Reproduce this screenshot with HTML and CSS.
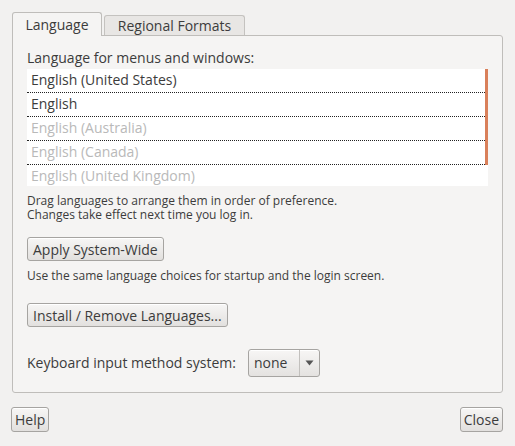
FILE: index.html
```html
<!DOCTYPE html>
<html>
<head>
<meta charset="utf-8">
<link rel="stylesheet" href="styles.css">
</head>
<body>
<div class="window">
  <div class="tabs">
    <div class="tab active">Language</div>
    <div class="tab">Regional Formats</div>
  </div>
  <div class="panel">
    <div class="label">Language for menus and windows:</div>
    <div class="list">
      <div class="rows">
        <div class="row">English (United States)</div>
        <div class="row">English</div>
        <div class="row dim">English (Australia)</div>
        <div class="row dim">English (Canada)</div>
        <div class="row dim last">English (United Kingdom)</div>
      </div>
      <div class="scrollbar"></div>
    </div>
    <div class="hint">
      <div class="hint-line">Drag languages to arrange them in order of preference.</div>
      <div class="hint-line">Changes take effect next time you log in.</div>
    </div>
    <div class="btn apply">Apply System-Wide</div>
    <div class="hint hint2">Use the same language choices for startup and the login screen.</div>
    <div class="btn install">Install / Remove Languages...</div>
    <div class="kbd">
      <span class="label">Keyboard input method system:</span>
      <div class="combo">
        <span class="combo-text">none</span>
        <span class="combo-arrow"><svg width="9" height="6" viewBox="0 0 9 6"><path d="M0.5 0.5 L8.5 0.5 L4.5 5.5 Z" fill="#555"/></svg></span>
      </div>
    </div>
  </div>
  <div class="footer">
    <div class="btn small">Help</div>
    <div class="btn small">Close</div>
  </div>
</div>
</body>
</html>
```
FILE: styles.css
```css
html, body {
  margin: 0;
  padding: 0;
  background: #f2f1f0;
}
body {
  font-family: "Open Sans", "DejaVu Sans", sans-serif;
  font-size: 14px;
  color: #3c3c3c;
}
.window {
  width: 515px;
  height: 446px;
  padding: 12px 12px 0 12px;
  box-sizing: border-box;
}
.tabs {
  display: flex;
  align-items: flex-end;
  height: 23px;
  position: relative;
  z-index: 1;
}
.tab {
  height: 20px;
  line-height: 19px;
  border: 1px solid #c4c2bf;
  border-bottom: none;
  border-radius: 3px 3px 0 0;
  background: #e8e6e4;
  margin-left: 2px;
  box-sizing: border-box;
  text-align: center;
}
.tab.active {
  height: 24px;
  line-height: 23px;
  background: #f5f4f3;
  border-color: #bfbdba;
  margin-left: 0;
  margin-bottom: -1px;
  width: 90px;
}
.tab:not(.active) {
  width: 141px;
}
.panel {
  height: 358px;
  border: 1px solid #bfbdba;
  border-radius: 0 3px 3px 3px;
  background: #f5f4f3;
  box-sizing: border-box;
  padding: 13px 14px 0 14px;
  display: flex;
  flex-direction: column;
  align-items: flex-start;
}
.label {
  line-height: 18px;
  height: 18px;
}
.list {
  margin-top: 2px;
  width: 461px;
  height: 117px;
  background: #fff;
  display: flex;
  overflow: hidden;
}
.rows {
  flex: 1;
}
.row {
  height: 24px;
  line-height: 22px;
  padding-left: 4px;
  border-bottom: 1px dotted #222;
  box-sizing: border-box;
  color: #3c3c3c;
}
.row.dim {
  color: #b9b9b9;
}
.row.last {
  border-bottom: none;
}
.scrollbar {
  width: 3px;
  height: 96px;
  background: #d9805a;
}
.hint {
  font-size: 12px;
  line-height: 14px;
  margin-top: 8px;
}
.hint-line {
  height: 14px;
  line-height: 14px;
}
.btn {
  display: inline-flex;
  align-items: center;
  justify-content: center;
  height: 24px;
  box-sizing: border-box;
  border: 1px solid #a6a4a1;
  border-radius: 3px;
  background: linear-gradient(#f7f6f5, #e2e0de);
  box-shadow: inset 0 1px 0 #fff;
  padding: 0 5px;
  color: #3c3c3c;
}
.btn.apply {
  margin-top: 15px;
}
.hint2 {
  margin-top: 8px;
}
.btn.install {
  margin-top: 20px;
}
.kbd {
  margin-top: 22px;
  display: flex;
  align-items: center;
  gap: 12px;
}
.combo {
  display: flex;
  height: 28px;
  width: 72px;
  border: 1px solid #a6a4a1;
  border-radius: 3px;
  box-sizing: border-box;
  background: linear-gradient(#f7f6f5, #e4e2e0);
  box-shadow: inset 0 1px 0 #fff;
}
.combo-text {
  width: 51px;
  padding-left: 5px;
  line-height: 26px;
  box-sizing: border-box;
  border-right: 1px solid #c2c0bd;
}
.combo-arrow {
  flex: 1;
  display: flex;
  align-items: center;
  justify-content: center;
}
.footer {
  display: flex;
  justify-content: space-between;
  margin-top: 14px;
  margin-left: -1px;
}
.btn.small {
  height: 25px;
  padding: 0 3px;
}
```
